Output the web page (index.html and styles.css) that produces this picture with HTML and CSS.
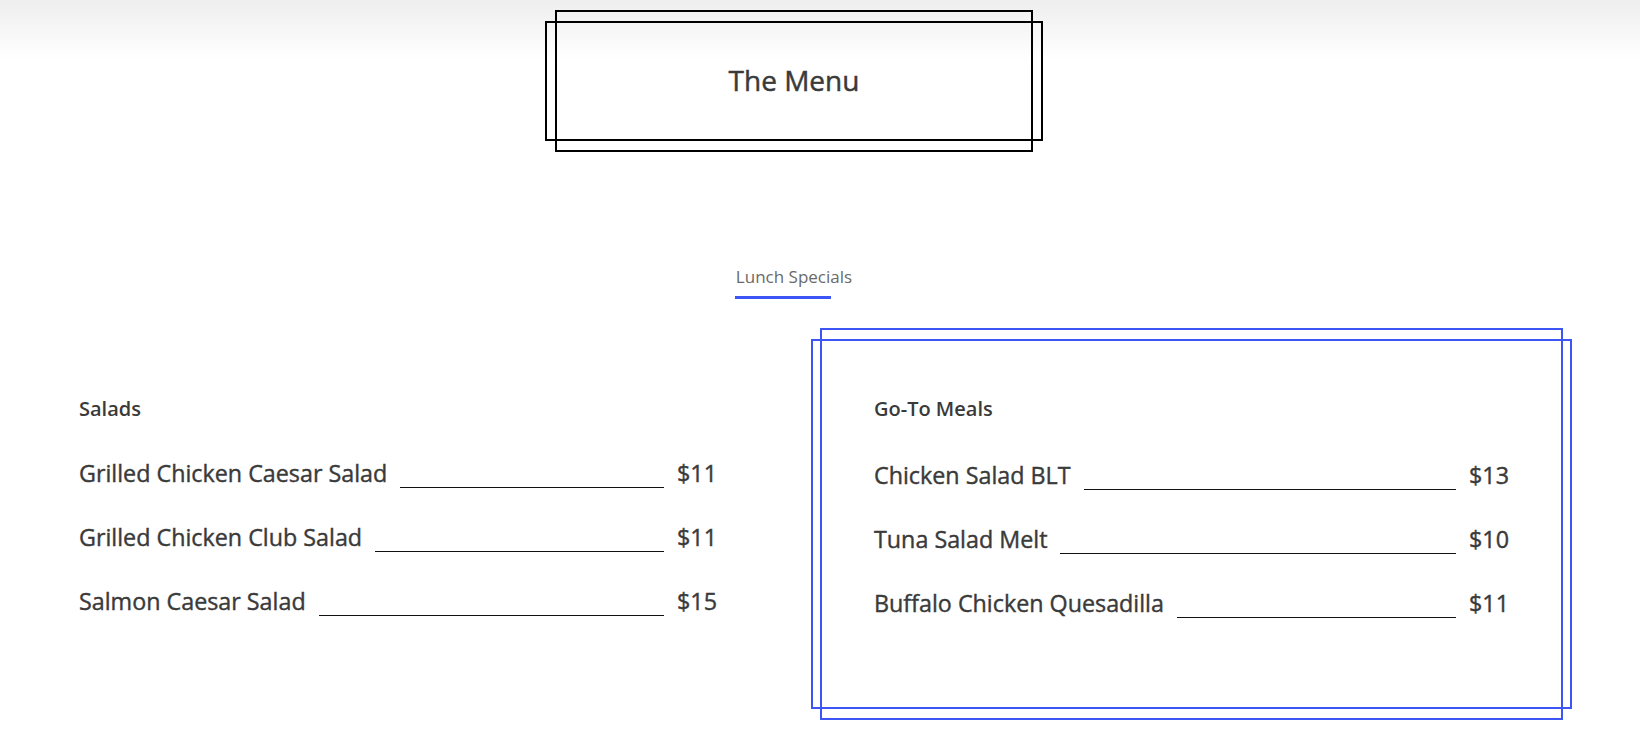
FILE: index.html
```html
<!DOCTYPE html>
<html lang="en">
<head>
<meta charset="utf-8">
<title>The Menu</title>
<link rel="stylesheet" href="styles.css">
</head>
<body>
<div class="page">
  <header class="header">
    <div class="title-box"><h1 class="title">The Menu</h1></div>
  </header>

  <nav class="tabs">
    <div class="tab tab-active">Lunch Specials</div>
  </nav>

  <section class="columns">
    <div class="menu-card menu-card-plain">
      <h2 class="menu-heading">Salads</h2>
      <ul class="menu-list">
        <li class="menu-item"><span class="item-name">Grilled Chicken Caesar Salad</span><span class="item-line"></span><span class="item-price">$11</span></li>
        <li class="menu-item"><span class="item-name">Grilled Chicken Club Salad</span><span class="item-line"></span><span class="item-price">$11</span></li>
        <li class="menu-item"><span class="item-name">Salmon Caesar Salad</span><span class="item-line"></span><span class="item-price">$15</span></li>
      </ul>
    </div>
    <div class="menu-card menu-card-framed">
      <h2 class="menu-heading">Go-To Meals</h2>
      <ul class="menu-list">
        <li class="menu-item"><span class="item-name">Chicken Salad BLT</span><span class="item-line"></span><span class="item-price">$13</span></li>
        <li class="menu-item"><span class="item-name">Tuna Salad Melt</span><span class="item-line"></span><span class="item-price">$10</span></li>
        <li class="menu-item"><span class="item-name">Buffalo Chicken Quesadilla</span><span class="item-line"></span><span class="item-price">$11</span></li>
      </ul>
    </div>
  </section>
</div>
</body>
</html>
```

FILE: styles.css
```css
html {
  background: #fff linear-gradient(#eeeeee 0, #ffffff 60px) no-repeat;
}

body {
  margin: 0;
  font-family: "Open Sans", "Noto Sans", sans-serif;
  color: #3a3a3a;
}

.page {
  width: 1556px;
  margin-left: 16px;
  padding-bottom: 20px;
}

.header {
  display: flex;
  justify-content: center;
  padding-top: 21px;
}

.title-box {
  position: relative;
  box-sizing: border-box;
  width: 498px;
  height: 120px;
  border: 2px solid #000;
  display: flex;
  align-items: center;
  justify-content: center;
}

.title-box::before {
  content: "";
  position: absolute;
  top: -13px;
  left: 8px;
  right: 8px;
  height: calc(100% + 26px);
  box-sizing: border-box;
  border: 2px solid #000;
}

.title {
  margin: 0 0 2px;
  font-size: 28px;
  font-weight: 400;
  -webkit-text-stroke: 0.45px #3a3a3a;
  color: #3a3a3a;
}

.tabs {
  display: flex;
  justify-content: center;
  margin-top: 124px;
}

.tab {
  font-size: 17px;
  line-height: 24px;
  color: #6a6a6a;
  padding-bottom: 10px;
  position: relative;
}

.tab-active::after {
  content: "";
  position: absolute;
  left: -1px;
  bottom: 0;
  width: 96px;
  height: 3px;
  background: #3c55f4;
}

.columns {
  display: grid;
  grid-template-columns: 1fr 1fr;
  column-gap: 34px;
  margin-top: 40px;
}

.menu-card {
  position: relative;
  box-sizing: border-box;
  height: 370px;
  border: 2px solid transparent;
  padding: 55px 61px 0;
}

.menu-card-plain {
  padding-right: 58px;
}

.menu-card-framed {
  border-color: #3c55f4;
}

.menu-card-framed::before {
  content: "";
  position: absolute;
  top: -13px;
  left: 7px;
  right: 7px;
  height: calc(100% + 26px);
  box-sizing: border-box;
  border: 2px solid #3c55f4;
}

.menu-heading {
  margin: 0;
  font-size: 20px;
  line-height: 26px;
  font-weight: 600;
  color: #3a3a3a;
}

.menu-list {
  list-style: none;
  margin: 37px 0 0;
  padding: 0;
  display: flex;
  flex-direction: column;
  gap: 35px;
}

.menu-card-framed .menu-list {
  margin-top: 39px;
}

.menu-item {
  display: flex;
  align-items: flex-start;
  font-size: 23.3px;
  line-height: 28px;
  font-weight: 400;
  -webkit-text-stroke: 0.4px #3a3a3a;
}

.item-line {
  flex: 1;
  height: 28px;
  border-bottom: 1px solid #111;
  margin: 0 13px;
}
```
